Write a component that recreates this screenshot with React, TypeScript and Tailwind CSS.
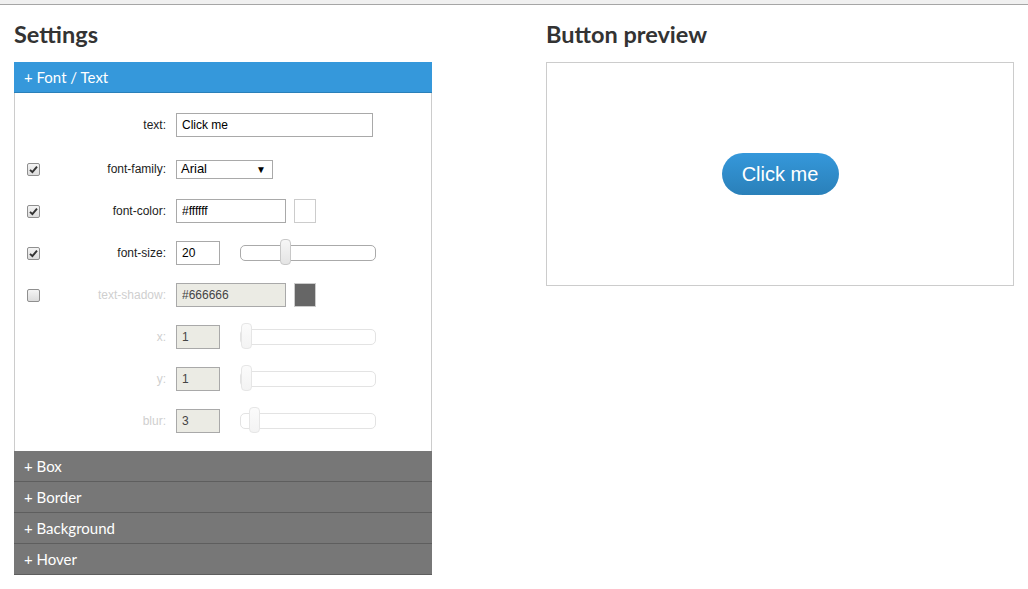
import React from "react";

const heading = "font-['Lato',sans-serif] font-bold text-[23.5px] leading-[28px] text-[#333]";
const labelFont = "font-['Liberation_Sans',Arial,sans-serif] text-[12px]";

function CheckBox({ checked }: { checked: boolean }) {
  return (
    <span className="flex h-[13px] w-[13px] items-center justify-center rounded-[2px] border border-[#8f8f8f] bg-gradient-to-b from-[#f4f4f4] to-[#dcdcdc]">
      {checked && (
        <svg width="9" height="9" viewBox="0 0 9 9">
          <path d="M1 4.8 L3.4 7.2 L8 1.6" stroke="#333" strokeWidth="1.9" fill="none" />
        </svg>
      )}
    </span>
  );
}

function Slider({ pos, disabled }: { pos: number; disabled?: boolean }) {
  return (
    <div
      className={`relative ml-[20px] h-[16px] w-[136px] rounded-[5px] border bg-white ${
        disabled ? "border-[#e3e3e3]" : "border-[#aaa]"
      }`}
    >
      <span
        className={`absolute top-[-7px] h-[26px] w-[11px] rounded-[4px] border bg-gradient-to-b ${
          disabled
            ? "border-[#e6e6e6] from-[#fbfbfb] to-[#f3f3f3]"
            : "border-[#c8c8c8] from-[#f6f6f6] to-[#e4e4e4]"
        }`}
        style={{ left: pos }}
      />
    </div>
  );
}

function Row({
  check,
  label,
  disabled,
  tall,
  children,
}: {
  check?: boolean | null;
  label: string;
  disabled?: boolean;
  tall?: boolean;
  children: React.ReactNode;
}) {
  return (
    <div className={`flex items-center ${tall ? "h-[45px] pb-[2px]" : "h-[42px]"}`}>
      <div className="flex w-[25px] justify-end">
        {check !== undefined && check !== null && <CheckBox checked={check} />}
      </div>
      <div
        className={`w-[126px] text-right ${labelFont} ${
          disabled ? "text-[#cfcfcf]" : "text-[#222]"
        }`}
      >
        {label}
      </div>
      <div className="ml-[10px] flex items-center">{children}</div>
    </div>
  );
}

function Field({
  value,
  width,
  disabled,
}: {
  value: string;
  width: string;
  disabled?: boolean;
}) {
  return (
    <input
      readOnly
      value={value}
      className={`h-[24px] ${width} border border-[#a9a9a9] px-[5px] ${labelFont} ${
        disabled ? "bg-[#ebebe4] text-[#444]" : "bg-white text-black"
      } outline-none`}
    />
  );
}

const sections = ["Box", "Border", "Background", "Hover"];

export default function App() {
  return (
    <div className="min-h-[589px] bg-white">
      <div className="h-[5px] border-b border-[#a6a6a6] bg-[#f0f0f0]" />
      <div className="flex gap-[114px] px-[14px] pt-[15px]">
        <div className="w-[418px]">
          <h2 className={heading}>Settings</h2>
          <div className="mt-[14px]">
            <div className="flex h-[31px] items-center border-b border-[#2a80b9] bg-[#3598db] pl-[10px] font-['Lato',sans-serif] text-[15px] text-white">
              + Font / Text
            </div>
            <div className="border-x border-[#cccccc] pt-[10px] pb-[9px]">
              <Row label="text:" tall>
                <Field value="Click me" width="w-[197px]" />
              </Row>
              <Row check label="font-family:">
                <div className="flex h-[19px] w-[97px] items-center justify-between border border-[#a9a9a9] bg-white pl-[4px] pr-[6px] font-['Liberation_Sans',Arial,sans-serif] text-[13px] text-black">
                  <span>Arial</span>
                  <span className="text-[10px]">▼</span>
                </div>
              </Row>
              <Row check label="font-color:">
                <Field value="#ffffff" width="w-[110px]" />
                <span className="ml-[8px] h-[24px] w-[22px] border border-[#cccccc] bg-white" />
              </Row>
              <Row check label="font-size:">
                <Field value="20" width="w-[44px]" />
                <Slider pos={39} />
              </Row>
              <Row check={false} label="text-shadow:" disabled>
                <Field value="#666666" width="w-[110px]" disabled />
                <span className="ml-[8px] h-[24px] w-[22px] border border-[#cccccc] bg-[#666666]" />
              </Row>
              <Row label="x:" disabled>
                <Field value="1" width="w-[44px]" disabled />
                <Slider pos={0} disabled />
              </Row>
              <Row label="y:" disabled>
                <Field value="1" width="w-[44px]" disabled />
                <Slider pos={0} disabled />
              </Row>
              <Row label="blur:" disabled>
                <Field value="3" width="w-[44px]" disabled />
                <Slider pos={8} disabled />
              </Row>
            </div>
            {sections.map((s) => (
              <div
                key={s}
                className="flex h-[31px] items-center border-b border-[#5e5e5e] bg-[#777777] pl-[10px] font-['Lato',sans-serif] text-[15px] text-white"
              >
                + {s}
              </div>
            ))}
          </div>
        </div>
        <div className="w-[468px]">
          <h2 className={heading}>Button preview</h2>
          <div className="mt-[14px] flex h-[224px] items-center justify-center border border-[#cccccc]">
            <button className="h-[42px] w-[117px] rounded-full bg-gradient-to-b from-[#3598db] to-[#2a80b9] font-['Liberation_Sans',Arial,sans-serif] text-[20px] text-white">
              Click me
            </button>
          </div>
        </div>
      </div>
    </div>
  );
}
